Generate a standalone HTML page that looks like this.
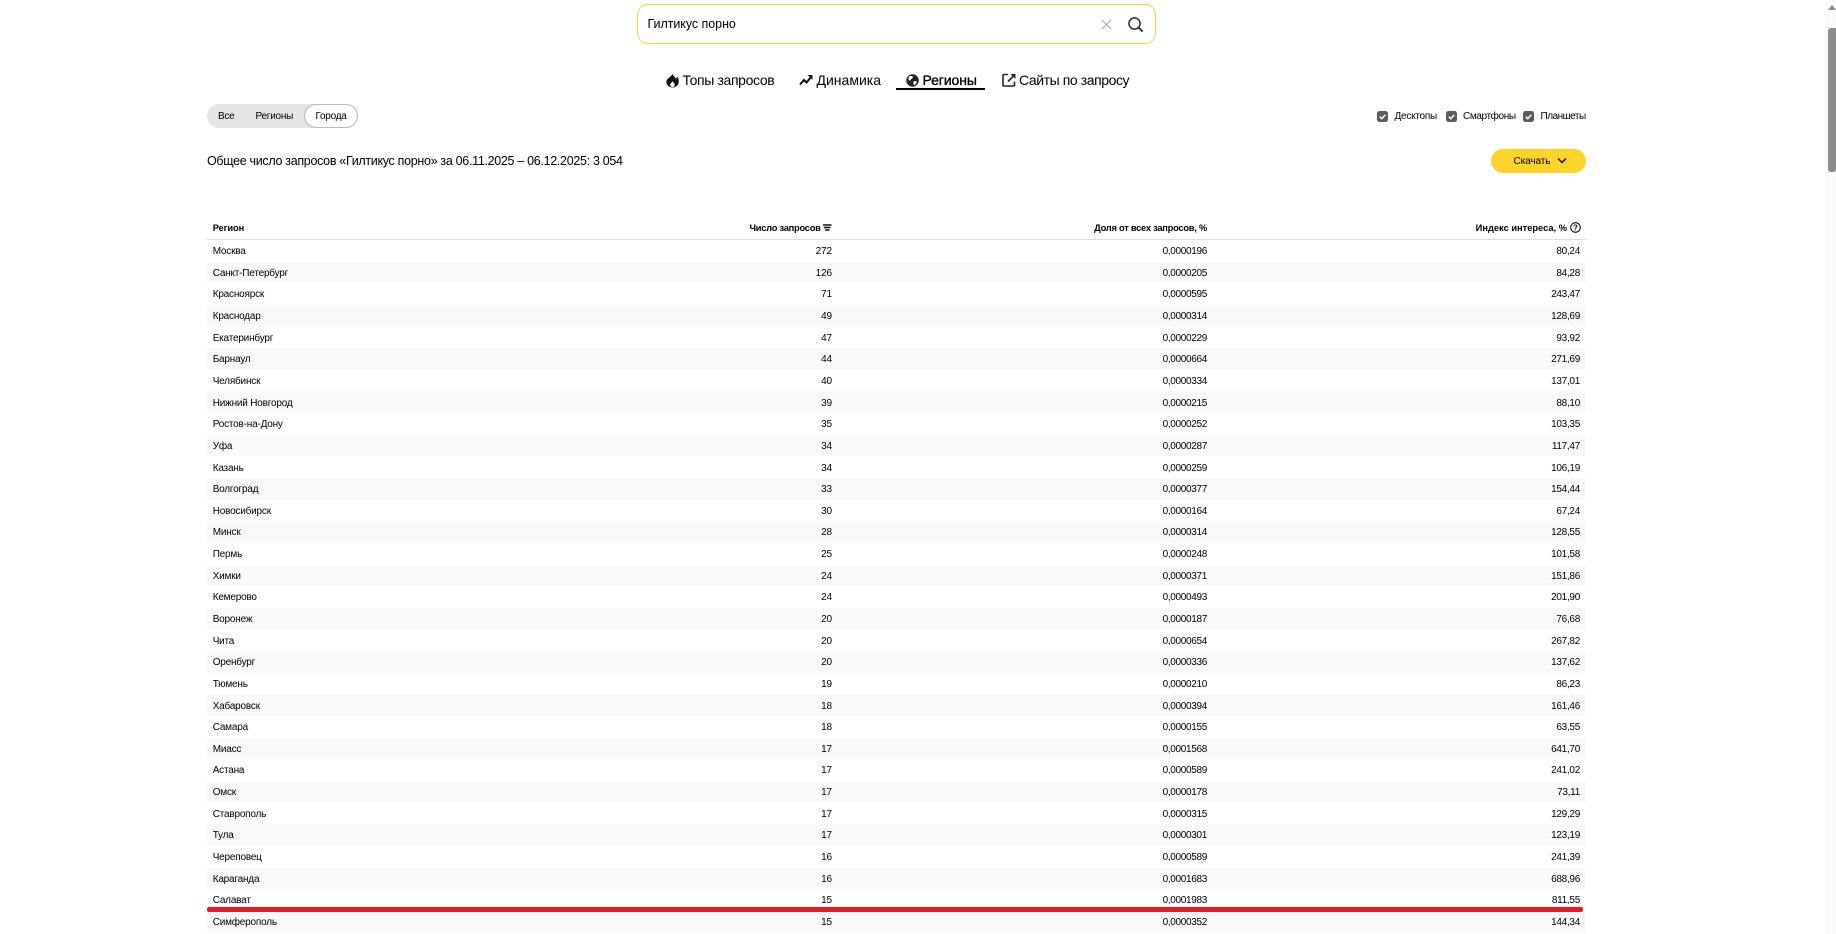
<!DOCTYPE html>
<html lang="ru">
<head>
<meta charset="utf-8">
<title>Регионы</title>
<style>
html,body{margin:0;padding:0;background:#fff;width:1836px;height:934px;overflow:hidden}
body{position:relative;font-family:"Liberation Sans","Noto Sans CJK SC",sans-serif;color:#000}
.a{position:absolute;white-space:nowrap}
#search{left:637px;top:4px;width:517px;height:37.500px;border:1px solid #fc3;border-radius:11px;background:#fff}
.nav{top:71px;font-size:14px;line-height:18px}
.sm{font-size:10px;line-height:14px;letter-spacing:-.25px}
#seg{left:207px;top:104px;width:151px;height:24px;background:#e5e5e5;border-radius:12px}
#seg i{position:absolute;left:97px;top:0;width:52px;height:22px;border:1px solid #bbb;background:#fff;border-radius:12px}
.cb{position:absolute;top:111px;width:11px;height:11px;background:#5b5b5b;border-radius:2.500px}
.cb svg{display:block}
#dl{left:1491px;top:149px;width:95px;height:24px;background:#fed42b;border-radius:12px}
#table{position:absolute;left:207px;top:216px;width:1379px}
.r{display:flex;height:21.650px;line-height:21.650px;font-size:10px}
.r:nth-child(even){background:#f9f9f9}
.r span{display:block;box-sizing:border-box;padding:0 6px;white-space:nowrap;position:relative;top:1.100px}
.r span:nth-child(1){width:300px;letter-spacing:-.2px;padding-left:5.700px}
.r span:nth-child(2){width:331px;text-align:right;letter-spacing:-.1px}
.r span:nth-child(3){width:375px;text-align:right;letter-spacing:-.32px}
.r span:nth-child(4){width:373px;text-align:right;letter-spacing:-.28px}
.h{height:23px;line-height:23px;border-bottom:1px solid #ddd;font-weight:bold;font-size:9.300px;letter-spacing:-.24px;display:flex}
.h span{display:block;box-sizing:border-box;padding:0 6px;white-space:nowrap;position:relative;top:.8px}
.h span:nth-child(1){width:300px;padding-left:5.700px;letter-spacing:-.1px}
.h span:nth-child(2){width:331px;text-align:right;padding-right:6px}
.h span:nth-child(3){width:375px;text-align:right}
.h span:nth-child(4){width:373px;text-align:right;padding-right:19px;letter-spacing:0}
#red{left:207px;top:907px;width:1376px;height:4.500px;background:#ed1c24;border-radius:2px}
#track{left:1825px;top:0;width:11px;height:934px;background:#fafafa}
#thumb{left:1828px;top:28px;width:8px;height:144px;background:#8c8c8c;border-radius:3px 0 3px 3px}
</style>
</head>
<body>
<div class="a" id="search"></div>
<div class="a" style="left:647.500px;top:16px;font-size:12.500px;line-height:16px;letter-spacing:-.05px">Гилтикус порно</div>
<svg class="a" style="left:1101px;top:18.500px" width="11" height="11" viewBox="0 0 11 11"><path d="M1 1l9 9M10 1l-9 9" stroke="#aaa" stroke-width="1.200" fill="none"/></svg>
<svg class="a" style="left:1127px;top:15.500px" width="17" height="17" viewBox="0 0 17 17"><circle cx="7.500" cy="7.500" r="5.600" fill="none" stroke="#333" stroke-width="1.500"/><path d="M11.600 11.600l4 4" stroke="#333" stroke-width="2" fill="none"/></svg>

<svg class="a" style="left:666px;top:72.500px" width="13" height="15" viewBox="0 0 13 15"><path d="M6.500 0.500c.4 2.400 2 3.300 3.600 5 .9-.7 1-1.500 1-2.200 1.200 1.600 1.700 3.400 1.700 5.200 0 3.600-2.800 6-6.300 6S.3 12.100.3 8.800C.3 5.200 5.800 4 6.500.500z" fill="#111"/><path d="M6.500 8c.3 1.200 2.300 2.200 2.300 3.900 0 1.300-1 2.100-2.300 2.100s-2.300-.8-2.300-2.100C4.200 10.200 6.200 9.400 6.500 8z" fill="#fff"/></svg>
<div class="a nav" style="left:682.500px;letter-spacing:-.36px">Топы запросов</div>
<svg class="a" style="left:799px;top:73.500px" width="14" height="12" viewBox="0 0 14 12"><path d="M1 10.500L5 6l2.500 2.500L12 3" stroke="#111" stroke-width="2" fill="none"/><path d="M8.500 1h5v5z" fill="#111"/></svg>
<div class="a nav" style="left:816.500px">Динамика</div>
<svg class="a" style="left:906px;top:74px" width="13" height="13" viewBox="0 0 13 13"><circle cx="6.500" cy="6.500" r="6.200" fill="#222"/><path d="M3 2.500c1.500-.8 3-.8 3.800.3.600.9-.5 1.700-1.400 2.200-1 .6-.6 1.600-1.600 1.600C2.600 6.600 2 4 3 2.500zM7.800 7.200c1.400-.5 2.800.2 3 1-.4 1.400-1.600 2.600-2.800 2.900-.8-1-.9-3-.2-3.900z" fill="#fff"/></svg>
<div class="a nav" style="left:922.500px;-webkit-text-stroke:.35px #000;letter-spacing:-.1px">Регионы</div>
<div class="a" style="left:896px;top:88px;width:89px;height:1.500px;background:#000"></div>
<svg class="a" style="left:1002px;top:73px" width="14" height="14" viewBox="0 0 14 14"><path d="M6 1.500H2a1 1 0 0 0-1 1V12a1 1 0 0 0 1 1h9.500a1 1 0 0 0 1-1V8.500" stroke="#222" stroke-width="1.600" fill="none"/><path d="M6 8.500L12 2.500" stroke="#222" stroke-width="1.600" fill="none"/><path d="M8.500 1h5v5z" fill="#222"/></svg>
<div class="a nav" style="left:1019px;letter-spacing:-.42px">Сайты по запросу</div>

<div class="a" id="seg"><i></i></div>
<div class="a sm" style="left:218px;top:109.800px">Все</div>
<div class="a sm" style="left:255.500px;top:109.800px">Регионы</div>
<div class="a sm" style="left:315.500px;top:109.800px">Города</div>

<div class="cb" style="left:1377px"><svg width="11" height="11" viewBox="0 0 11 11"><path d="M2.800 5.700l2 2 3.500-4" stroke="#fff" stroke-width="1.500" fill="none"/></svg></div>
<div class="a sm" style="left:1394.500px;top:109.800px">Десктопы</div>
<div class="cb" style="left:1446px"><svg width="11" height="11" viewBox="0 0 11 11"><path d="M2.800 5.700l2 2 3.500-4" stroke="#fff" stroke-width="1.500" fill="none"/></svg></div>
<div class="a sm" style="left:1463px;top:109.800px;letter-spacing:-.38px">Смартфоны</div>
<div class="cb" style="left:1523px"><svg width="11" height="11" viewBox="0 0 11 11"><path d="M2.800 5.700l2 2 3.500-4" stroke="#fff" stroke-width="1.500" fill="none"/></svg></div>
<div class="a sm" style="left:1540.500px;top:109.800px;letter-spacing:-.5px">Планшеты</div>

<div class="a" style="left:207px;top:152.500px;font-size:12.500px;line-height:16px;letter-spacing:-.31px">Общее число запросов «Гилтикус порно» за 06.11.2025 – 06.12.2025: 3 054</div>
<div class="a" id="dl"></div>
<div class="a sm" style="left:1513.500px;top:155px;letter-spacing:-.1px">Скачать</div>
<svg class="a" style="left:1557px;top:157px" width="10" height="8" viewBox="0 0 10 8"><path d="M1 1.500l4 4 4-4" stroke="#111" stroke-width="1.500" fill="none"/></svg>

<div id="table">
<div class="h"><span>Регион</span><span>Число запросов <svg width="9" height="8" viewBox="0 0 9 8" style="vertical-align:-1.500px"><path d="M0 1h8.500M1 3.500h6.500M2 6h4.500" stroke="#111" stroke-width="1.500" fill="none"/></svg></span><span>Доля от всех запросов, %</span><span>Индекс интереса, %</span></div>
<div>
<div class="r"><span>Москва</span><span>272</span><span>0,0000196</span><span>80,24</span></div>
<div class="r"><span>Санкт-Петербург</span><span>126</span><span>0,0000205</span><span>84,28</span></div>
<div class="r"><span>Красноярск</span><span>71</span><span>0,0000595</span><span>243,47</span></div>
<div class="r"><span>Краснодар</span><span>49</span><span>0,0000314</span><span>128,69</span></div>
<div class="r"><span>Екатеринбург</span><span>47</span><span>0,0000229</span><span>93,92</span></div>
<div class="r"><span>Барнаул</span><span>44</span><span>0,0000664</span><span>271,69</span></div>
<div class="r"><span>Челябинск</span><span>40</span><span>0,0000334</span><span>137,01</span></div>
<div class="r"><span>Нижний Новгород</span><span>39</span><span>0,0000215</span><span>88,10</span></div>
<div class="r"><span>Ростов-на-Дону</span><span>35</span><span>0,0000252</span><span>103,35</span></div>
<div class="r"><span>Уфа</span><span>34</span><span>0,0000287</span><span>117,47</span></div>
<div class="r"><span>Казань</span><span>34</span><span>0,0000259</span><span>106,19</span></div>
<div class="r"><span>Волгоград</span><span>33</span><span>0,0000377</span><span>154,44</span></div>
<div class="r"><span>Новосибирск</span><span>30</span><span>0,0000164</span><span>67,24</span></div>
<div class="r"><span>Минск</span><span>28</span><span>0,0000314</span><span>128,55</span></div>
<div class="r"><span>Пермь</span><span>25</span><span>0,0000248</span><span>101,58</span></div>
<div class="r"><span>Химки</span><span>24</span><span>0,0000371</span><span>151,86</span></div>
<div class="r"><span>Кемерово</span><span>24</span><span>0,0000493</span><span>201,90</span></div>
<div class="r"><span>Воронеж</span><span>20</span><span>0,0000187</span><span>76,68</span></div>
<div class="r"><span>Чита</span><span>20</span><span>0,0000654</span><span>267,82</span></div>
<div class="r"><span>Оренбург</span><span>20</span><span>0,0000336</span><span>137,62</span></div>
<div class="r"><span>Тюмень</span><span>19</span><span>0,0000210</span><span>86,23</span></div>
<div class="r"><span>Хабаровск</span><span>18</span><span>0,0000394</span><span>161,46</span></div>
<div class="r"><span>Самара</span><span>18</span><span>0,0000155</span><span>63,55</span></div>
<div class="r"><span>Миасс</span><span>17</span><span>0,0001568</span><span>641,70</span></div>
<div class="r"><span>Астана</span><span>17</span><span>0,0000589</span><span>241,02</span></div>
<div class="r"><span>Омск</span><span>17</span><span>0,0000178</span><span>73,11</span></div>
<div class="r"><span>Ставрополь</span><span>17</span><span>0,0000315</span><span>129,29</span></div>
<div class="r"><span>Тула</span><span>17</span><span>0,0000301</span><span>123,19</span></div>
<div class="r"><span>Череповец</span><span>16</span><span>0,0000589</span><span>241,39</span></div>
<div class="r"><span>Караганда</span><span>16</span><span>0,0001683</span><span>688,96</span></div>
<div class="r"><span>Салават</span><span>15</span><span>0,0001983</span><span>811,55</span></div>
<div class="r"><span>Симферополь</span><span>15</span><span>0,0000352</span><span>144,34</span></div>
</div>
</div>
<svg class="a" style="left:1570px;top:222px" width="11" height="11" viewBox="0 0 11 11"><circle cx="5.500" cy="5.500" r="4.800" fill="none" stroke="#111" stroke-width="1.100"/><text x="5.500" y="8.300" text-anchor="middle" font-size="8" font-weight="bold" font-family="Liberation Sans" fill="#111">?</text></svg>
<div class="a" id="red"></div>
<div class="a" id="track"></div>
<svg class="a" style="left:1828px;top:5px" width="8" height="5" viewBox="0 0 8 5"><path d="M0 5L4 0l4 5z" fill="#8c8c8c"/></svg>
<div class="a" id="thumb"></div>
</body>
</html>
